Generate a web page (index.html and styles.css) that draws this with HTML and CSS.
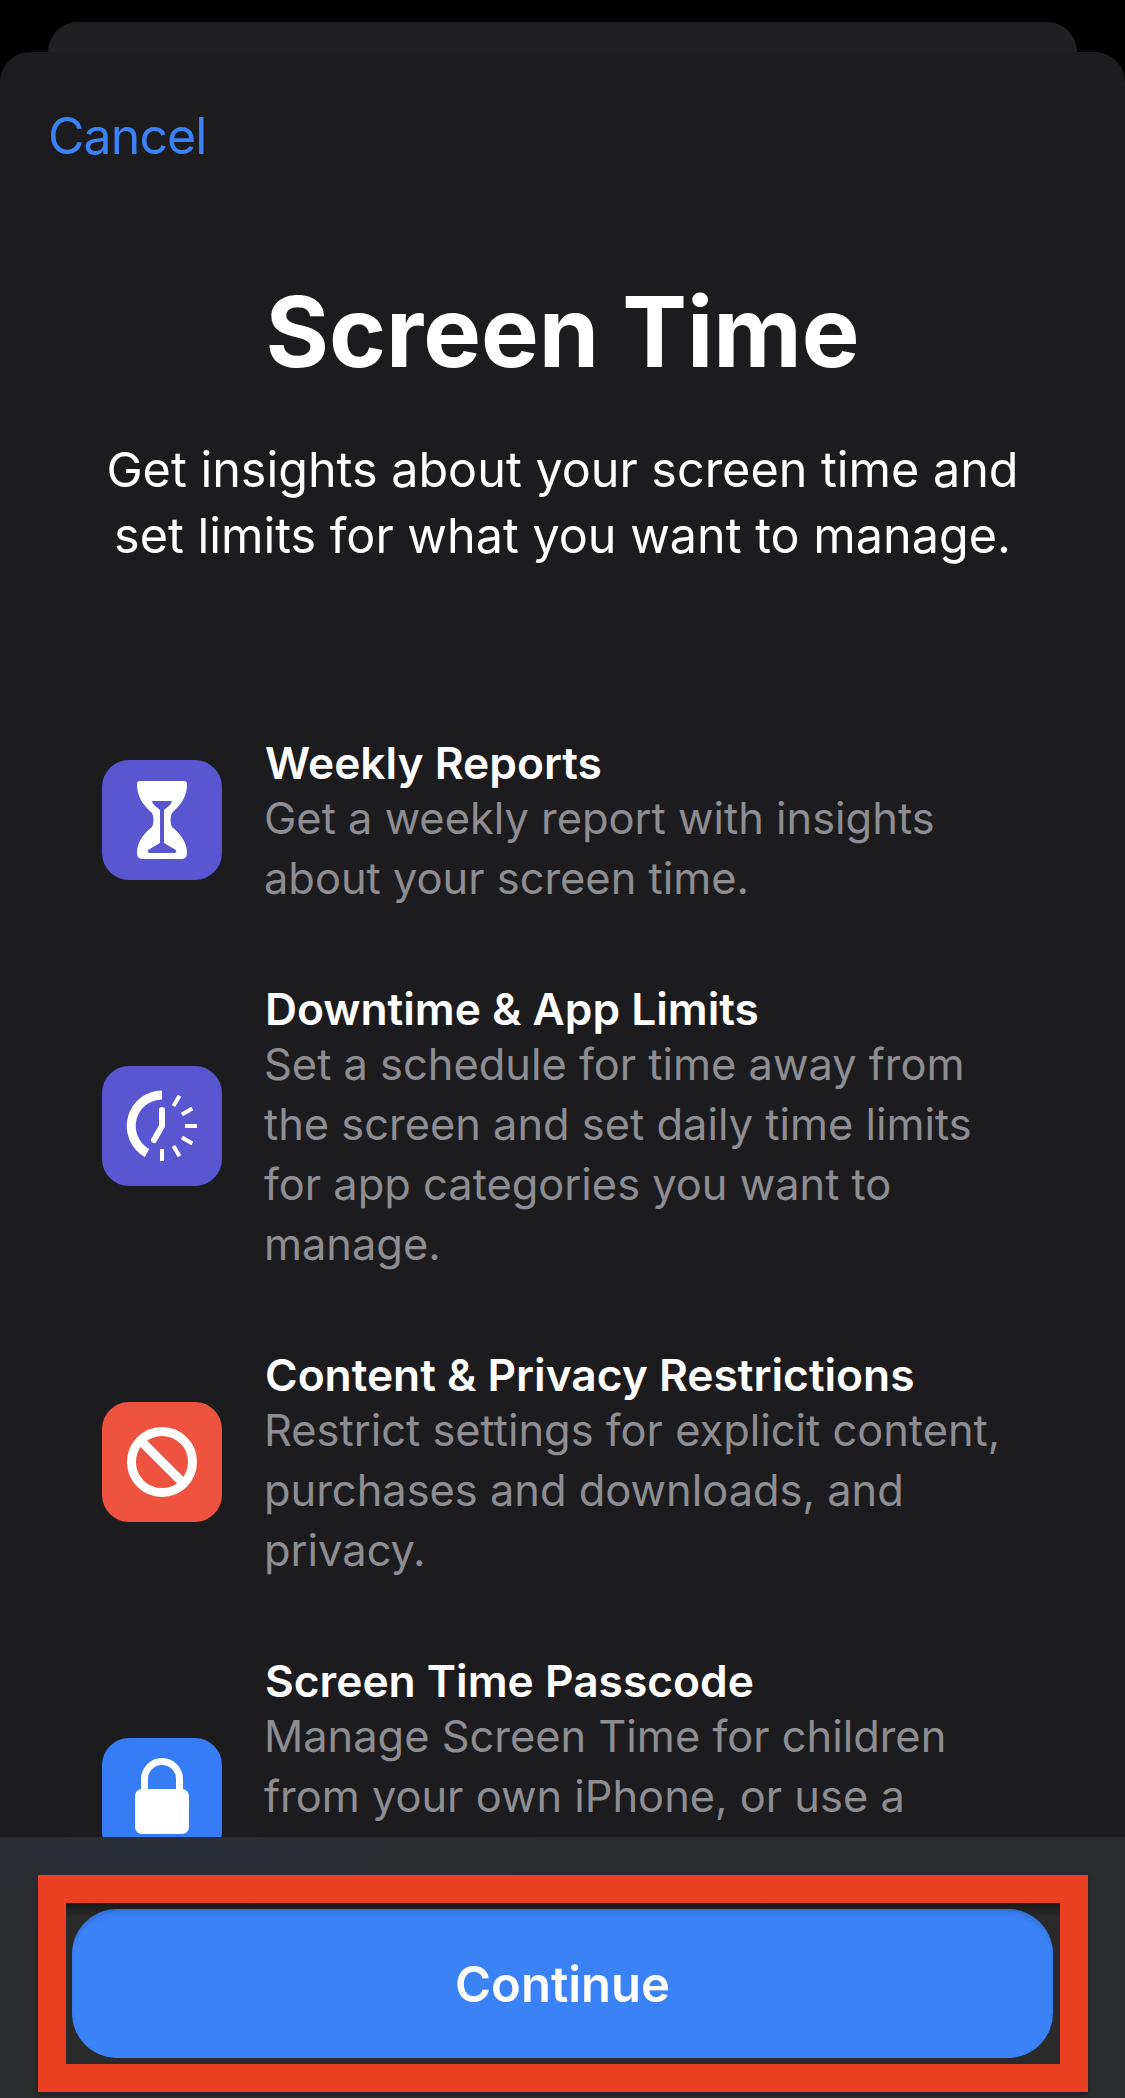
FILE: index.html
```html
<!doctype html>
<html>

<head>
	<meta charset="UTF-8">
	<title>Screen Time</title>
	<link rel="stylesheet" href="styles.css">
</head>

<body>
	<div class="back_sheet"></div>
	<div class="sheet">
		<div class="content">
			<a class="cancel">Cancel</a>
			<h1>Screen Time</h1>
			<p class="intro">Get insights about your screen time and<br>set limits for what you want to manage.</p>

			<div class="features">
				<div class="feature">
					<svg class="icon purple" viewBox="0 0 120 120">
						<path fill="#fff" fill-rule="evenodd" d="M38 21H82Q85 21 85 24C85 40 75 48 70 53C68 57 68 63 70 67C76 72 85 80 85 93Q85 99 79 99H41Q35 99 35 93C35 80 44 72 50 67C52 63 52 57 50 53C45 48 35 40 35 24Q35 21 38 21ZM50 41Q50 44 58 50V83L46 90Q45 92 47 93H73Q75 92 74 90L62 83V50Q70 44 70 41Z" />
					</svg>
					<div class="text">
						<h3>Weekly Reports</h3>
						<p>Get a weekly report with insights<br>about your screen time.</p>
					</div>
				</div>

				<div class="feature">
					<svg class="icon purple" viewBox="0 0 120 120">
						<g fill="none" stroke="#fff">
							<path stroke-width="9" d="M60 29A31 31 0 0 0 45 87" />
							<path stroke-width="6" stroke-linecap="round" stroke-linejoin="round" d="M60 44V60L52 74" />
							<g stroke-width="4">
								<path d="M60 25V37" transform="rotate(30 60 60)" />
								<path d="M60 25V37" transform="rotate(60 60 60)" />
								<path d="M60 25V37" transform="rotate(90 60 60)" />
								<path d="M60 25V37" transform="rotate(120 60 60)" />
								<path d="M60 25V37" transform="rotate(150 60 60)" />
								<path d="M60 25V37" transform="rotate(180 60 60)" />
							</g>
						</g>
					</svg>
					<div class="text">
						<h3>Downtime &amp; App Limits</h3>
						<p>Set a schedule for time away from<br>the screen and set daily time limits<br>for app categories you want to<br>manage.</p>
					</div>
				</div>

				<div class="feature">
					<svg class="icon red" viewBox="0 0 120 120">
						<g fill="none" stroke="#fff" stroke-width="9">
							<circle cx="60" cy="60" r="30.5" />
							<path d="M38 38L82 82" />
						</g>
					</svg>
					<div class="text">
						<h3>Content &amp; Privacy Restrictions</h3>
						<p>Restrict settings for explicit content,<br>purchases and downloads, and<br>privacy.</p>
					</div>
				</div>

				<div class="feature feature_cut">
					<svg class="icon blue" viewBox="0 0 120 120">
						<path fill="none" stroke="#fff" stroke-width="7" d="M42.5 53V41A17.5 17.5 0 0 1 77.5 41V53" />
						<rect x="33" y="51" width="54" height="45" rx="7" fill="#fff" />
					</svg>
					<div class="text">
						<h3>Screen Time Passcode</h3>
						<p>Manage Screen Time for children<br>from your own iPhone, or use a</p>
					</div>
				</div>
			</div>
		</div>

		<div class="footer">
			<div class="highlight">
				<button class="continue">Continue</button>
			</div>
		</div>
	</div>
</body>

</html>
```

FILE: styles.css
```css
* {
	box-sizing: border-box;
}

html,
body {
	margin: 0;
	height: 2098px;
	overflow: hidden;
}

body {
	background: #000;
	padding-top: 22px;
	display: flex;
	flex-direction: column;
	font-family: Inter, "Liberation Sans", sans-serif;
	color: #fff;
}

.back_sheet {
	height: 30px;
	flex: none;
	margin: 0 48px;
	background: #202022;
	border-radius: 30px 30px 0 0;
}

.sheet {
	flex: 1;
	min-height: 0;
	display: flex;
	flex-direction: column;
	background: #1c1c1e;
	border-radius: 30px 30px 0 0;
	overflow: hidden;
}

.content {
	flex: 1;
	min-height: 0;
	overflow: hidden;
	padding-top: 54px;
}

.cancel {
	display: block;
	margin-left: 48px;
	font-size: 50px;
	line-height: 60px;
	letter-spacing: -0.9px;
	color: #3b82f6;
}

h1 {
	margin: 106px 0 0;
	text-align: center;
	font-size: 97px;
	line-height: 120px;
	font-weight: 700;
}

.intro {
	margin: 45px 0 0;
	text-align: center;
	font-size: 48.5px;
	line-height: 66px;
}

.features {
	margin-top: 163px;
	padding-left: 102px;
	display: flex;
	flex-direction: column;
	gap: 70px;
}

.feature {
	display: flex;
	align-items: center;
	gap: 42px;
}

/* last row runs under the footer, only its first lines show */
.feature_cut {
	min-height: 296px;
}

.feature_cut .text {
	align-self: flex-start;
}

.icon {
	width: 120px;
	height: 120px;
	flex: none;
	border-radius: 27px;
}

.purple {
	background: #5856d0;
}

.red {
	background: #ee5340;
}

.blue {
	background: #367cf6;
}

.text h3 {
	margin: 0 0 0 1px;
	padding-top: 6px;
	font-size: 44.3px;
	line-height: 50px;
	font-weight: 600;
}

.text p {
	margin: 0;
	font-size: 43.4px;
	line-height: 60px;
	color: #8e8e92;
	white-space: nowrap;
}

.footer {
	flex: none;
	height: 261px;
	padding: 38px 37px 6px 38px;
	background: radial-gradient(ellipse 400px 130px at 165px 0, #2a2f37, #2a2b2c 100%);
}

.highlight {
	height: 217px;
	padding: 6px 7px 6px 6px;
	border: 28px solid #eb4024;
	background: linear-gradient(#191919, #2a2a2a 14px);
	box-shadow: 0 2px 5px rgba(0, 0, 0, .3);
}

.continue {
	display: block;
	width: 100%;
	height: 100%;
	padding: 2px 0 0;
	border: 0;
	border-radius: 45px;
	background: #3b82f6;
	box-shadow: inset 0 6px 6px -4px rgba(0, 0, 0, .22);
	color: #fff;
	font-family: inherit;
	font-size: 49px;
	font-weight: 600;
}
```
